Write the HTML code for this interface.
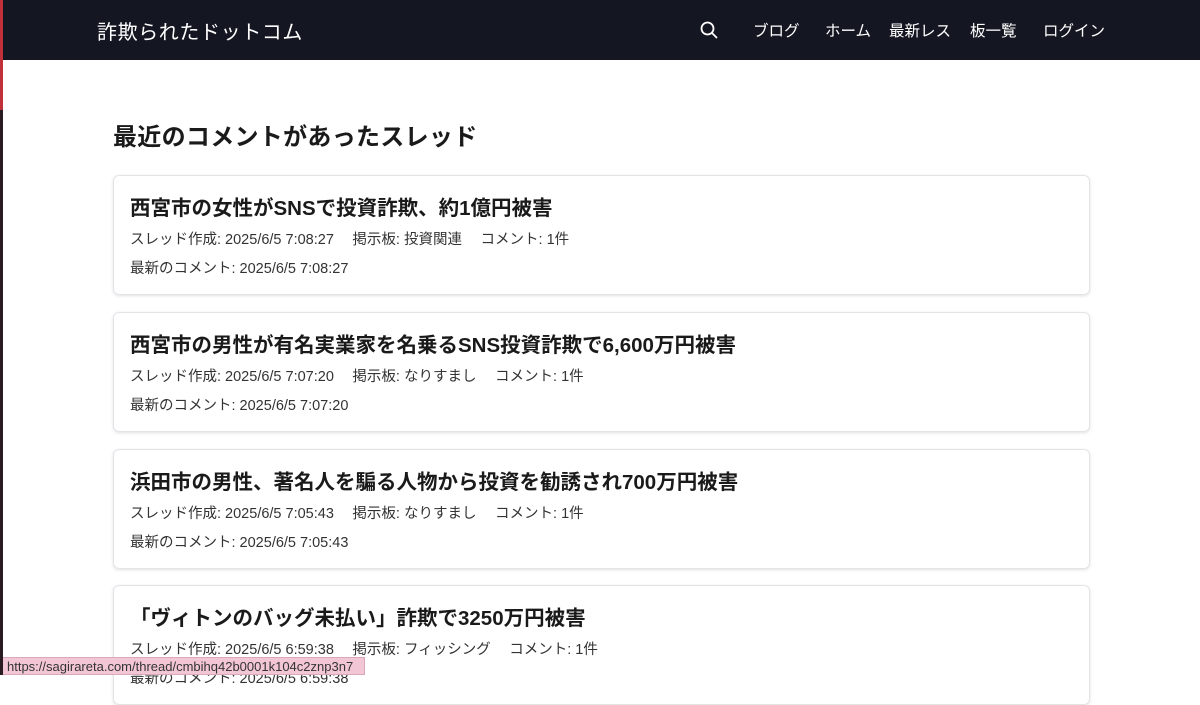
<!DOCTYPE html>
<html><head><meta charset="utf-8"><style>
*{margin:0;padding:0;box-sizing:border-box}
body{width:1200px;height:675px;overflow:hidden;background:#fff;font-family:"Liberation Sans","Noto Sans CJK JP",sans-serif;color:#1f2937;position:relative}
.strip{position:absolute;left:0;top:0;width:3px;height:675px;background:#2a1a22;z-index:5}
.strip:before{content:"";position:absolute;left:0;top:0;width:3px;height:110px;background:#c0303a}
header{height:60px;background:#141722;color:#fff;position:relative}
.logo{position:absolute;left:97px;top:16px;font-size:20px;letter-spacing:0.6px}
nav{position:absolute;top:19px;font-size:15.5px}
nav span{position:absolute;white-space:nowrap}
h1{position:absolute;left:113px;top:117px;font-size:24px;font-weight:bold;color:#1a1a1a;letter-spacing:0.3px}
.card{position:absolute;left:113px;width:977px;height:120px;border:1px solid #e2e4e8;border-radius:6px;box-shadow:0 1px 3px rgba(0,0,0,.12)}
.card h2{position:absolute;left:16px;top:15px;font-size:20.5px;font-weight:bold;color:#1a1a1a;white-space:nowrap}
.card p{position:absolute;left:16px;font-size:14.5px;color:#333;white-space:nowrap}
.m1{top:52px}.m2{top:81px}
.status{position:absolute;left:0;top:657px;height:18px;width:365px;background:#f3c6d6;border:1px solid #d9a9bb;font-size:13px;color:#333;padding:1px 6px;white-space:nowrap;overflow:hidden}
</style></head><body>
<div class="strip"></div>
<header><div class="logo">詐欺られたドットコム</div>
<svg style="position:absolute;left:699px;top:20px" width="20" height="20" viewBox="0 0 20 20"><circle cx="8.5" cy="8.5" r="6" fill="none" stroke="#fff" stroke-width="1.8"/><line x1="13" y1="13" x2="17.5" y2="17.5" stroke="#fff" stroke-width="1.8" stroke-linecap="round"/></svg>
<nav><span style="left:753px">ブログ</span><span style="left:825px">ホーム</span><span style="left:889px">最新レス</span><span style="left:970px">板一覧</span><span style="left:1043px">ログイン</span></nav>
</header>
<h1>最近のコメントがあったスレッド</h1>
<div class="card" style="top:175px"><h2>西宮市の女性がSNSで投資詐欺、約1億円被害</h2><p class="m1">スレッド作成: 2025/6/5 7:08:27　 掲示板: 投資関連　 コメント: 1件</p><p class="m2">最新のコメント: 2025/6/5 7:08:27</p></div>
<div class="card" style="top:312px"><h2>西宮市の男性が有名実業家を名乗るSNS投資詐欺で6,600万円被害</h2><p class="m1">スレッド作成: 2025/6/5 7:07:20　 掲示板: なりすまし　 コメント: 1件</p><p class="m2">最新のコメント: 2025/6/5 7:07:20</p></div>
<div class="card" style="top:449px"><h2>浜田市の男性、著名人を騙る人物から投資を勧誘され700万円被害</h2><p class="m1">スレッド作成: 2025/6/5 7:05:43　 掲示板: なりすまし　 コメント: 1件</p><p class="m2">最新のコメント: 2025/6/5 7:05:43</p></div>
<div class="card" style="top:585px"><h2>「ヴィトンのバッグ未払い」詐欺で3250万円被害</h2><p class="m1">スレッド作成: 2025/6/5 6:59:38　 掲示板: フィッシング　 コメント: 1件</p><p class="m2">最新のコメント: 2025/6/5 6:59:38</p></div>
<div class="status">https://sagirareta.com/thread/cmbihq42b0001k104c2znp3n7</div>
</body></html>
